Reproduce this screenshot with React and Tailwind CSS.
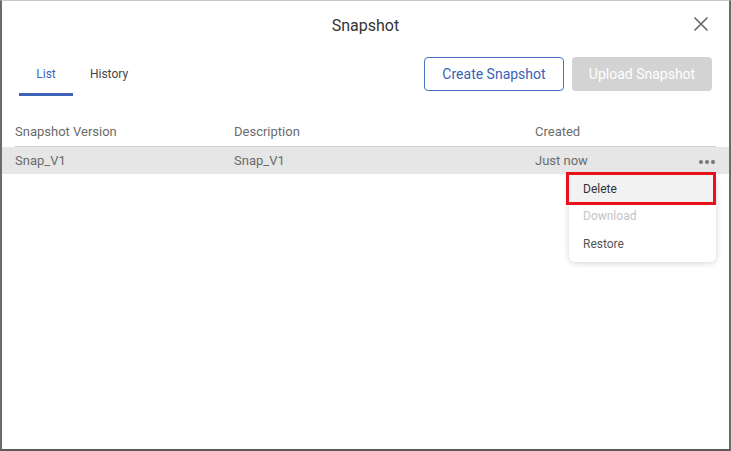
import React from "react";

export default function App() {
  return (
    <div className="w-[731px] h-[451px] bg-white border-t border-t-[#c8c8c8] border-l-2 border-l-[#6b6b6b] border-r-2 border-r-[#6b6b6b] border-b-2 border-b-[#5a5a5a] relative overflow-hidden" style={{ fontFamily: "Roboto, 'Liberation Sans', sans-serif" }}>
      <div className="h-[48px] flex items-center justify-center relative">
        <span className="text-[16px] text-[#333] mt-[1px]">Snapshot</span>
        <svg className="absolute right-[20px] top-[15px]" width="16" height="16" viewBox="0 0 16 16">
          <path d="M1.5 1.5 L14.5 14.5 M14.5 1.5 L1.5 14.5" stroke="#666" strokeWidth="1.6" fill="none" />
        </svg>
      </div>
      <div className="flex items-end justify-between pl-[17px] pr-[17px] mt-[8px]">
        <div className="flex">
          <div className="w-[54px] h-[38px] flex flex-col items-center justify-end">
            <span className="text-[12px] text-[#3a66c4] mb-[10px]">List</span>
            <div className="w-full h-[3px] bg-[#3e63b8]" />
          </div>
          <div className="w-[72px] h-[38px] flex flex-col items-center justify-end">
            <span className="text-[12px] text-[#444] mb-[13px]">History</span>
          </div>
        </div>
        <div className="flex gap-[8px] mb-[5px]">
          <button className="w-[140px] h-[34px] border border-[#4a72c4] rounded-[4px] text-[14px] text-[#3a62b8] bg-white">Create Snapshot</button>
          <button className="w-[140px] h-[34px] rounded-[4px] text-[14px] text-white bg-[#d3d3d3]">Upload Snapshot</button>
        </div>
      </div>
      <div className="mt-[25px]">
        <div className="mx-[13px] flex h-[26px] items-center pb-[3px] border-b border-[#cfcfcf] text-[13px] text-[#6b6b6b]">
          <div className="w-[219px]">Snapshot Version</div>
          <div className="w-[301px]">Description</div>
          <div>Created</div>
        </div>
        <div className="flex h-[27px] items-center bg-[#e6e6e6] pl-[13px] pr-[14px] text-[13px] text-[#6b6b6b]">
          <div className="w-[219px]">Snap_V1</div>
          <div className="w-[301px]">Snap_V1</div>
          <div className="flex-1">Just now</div>
          <div className="flex gap-[2px] mt-[2px]">
            <span className="w-[4px] h-[4px] rounded-full bg-[#777]" />
            <span className="w-[4px] h-[4px] rounded-full bg-[#777]" />
            <span className="w-[4px] h-[4px] rounded-full bg-[#777]" />
          </div>
        </div>
      </div>
      <div className="absolute left-[567px] top-[174px] w-[147px] h-[87px] bg-white rounded-[6px] shadow-[0_1px_6px_rgba(0,0,0,0.18)]">
        <div className="h-[27px] flex items-center pl-[14px] text-[12px] text-[#333] bg-[#f2f2f2]">Delete</div>
        <div className="h-[28px] flex items-center pl-[14px] text-[12px] text-[#c4c4c4]">Download</div>
        <div className="h-[27px] flex items-center pl-[14px] text-[12px] text-[#555]">Restore</div>
      </div>
      <div className="absolute left-[564px] top-[171px] w-[150px] h-[33px] border-[3px] border-[#e8121c]" />
    </div>
  );
}
